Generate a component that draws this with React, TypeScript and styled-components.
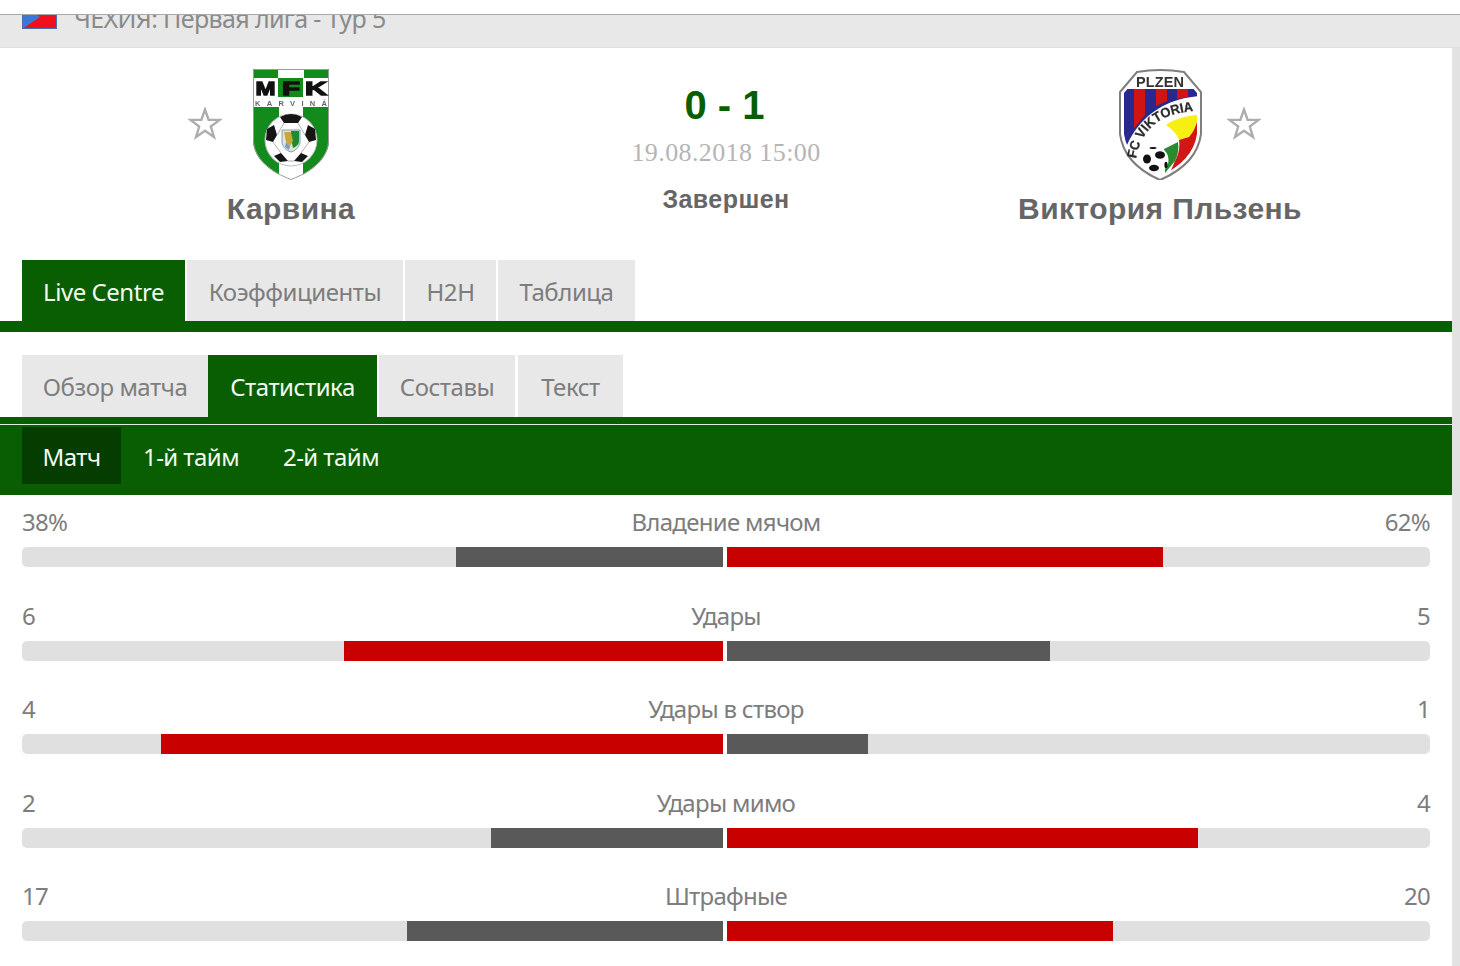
import React from "react";
import styled, { createGlobalStyle } from "styled-components";

const GREEN = "#085e00";
const UI_FONT = `"Noto Sans", "DejaVu Sans", sans-serif`;

const Global = createGlobalStyle`
  html, body { margin: 0; padding: 0; height: 966px; overflow: hidden; background: #e2e2e2; }
  * { box-sizing: border-box; }
`;

const TopStrip = styled.div`
  height: 15px;
  background: #fff;
  border-bottom: 1px solid #a9a9a9;
`;

const LeagueBand = styled.div`
  height: 33px;
  overflow: hidden;
  background: #e8e8e8;
  border-bottom: 1px solid #e0e0e0;
  padding-left: 22px;
  display: flex;
  align-items: flex-start;
  gap: 17px;
`;

const Flag = styled.svg`
  width: 35px;
  height: 24px;
  margin-top: -10px;
  flex: none;
`;

const LeagueName = styled.div`
  font: 25px/24px ${UI_FONT};
  letter-spacing: -0.63px;
  color: #8a8a8a;
  margin-top: -9px;
  white-space: nowrap;
`;

const Page = styled.main`
  width: 1452px;
  height: 918px;
  background: #fff;
  overflow: hidden;
`;

const Header = styled.section`
  height: 212px;
  display: grid;
  grid-template-columns: 582px 288px 580px;
`;

const Team = styled.div`
  padding-top: 21px;
  display: flex;
  flex-direction: column;
  align-items: center;
`;

const CrestRow = styled.div<{ $gap: number }>`
  width: 100%;
  display: grid;
  grid-template-columns: 1fr auto 1fr;
  column-gap: ${(p) => p.$gap}px;
  align-items: center;
`;

const StarIcon = styled.svg<{ $side: "left" | "right" }>`
  width: 34px;
  height: 34px;
  margin-bottom: 2px;
  justify-self: ${(p) => (p.$side === "left" ? "end" : "start")};
  grid-column: ${(p) => (p.$side === "left" ? 1 : 3)};
  grid-row: 1;
`;

const CrestSvg = styled.svg`
  grid-column: 2;
  grid-row: 1;
  display: block;
  filter: blur(0.35px);
`;

const TeamName = styled.div`
  margin-top: 11px;
  font: bold 30px/36px "Liberation Sans", Arial, sans-serif;
  letter-spacing: 0.42px;
  color: #666;
  white-space: nowrap;
`;

const Center = styled.div`
  padding: 32px 3px 0 0;
  display: flex;
  flex-direction: column;
  align-items: center;
`;

const Score = styled.div`
  font: bold 40px/50px "Liberation Sans", Arial, sans-serif;
  color: ${GREEN};
`;

const DateText = styled.div`
  margin: 8px -3px 0 0;
  font: 26px/30px "Liberation Serif", "Times New Roman", serif;
  letter-spacing: 0.4px;
  color: #b5b5b5;
`;

const Status = styled.div`
  margin: 16px -3px 0 0;
  font: bold 25px/30px "Liberation Sans", Arial, sans-serif;
  letter-spacing: 0.45px;
  color: #666;
`;

const TabBar = styled.nav<{ $gap: number; $top: number; $line: number }>`
  margin-top: ${(p) => p.$top}px;
  padding-left: 22px;
  display: flex;
  gap: ${(p) => p.$gap}px;
  border-bottom: ${(p) => p.$line}px solid ${GREEN};
`;

const Tab = styled.div<{ $active?: boolean; $w: number; $h: number; $after?: number }>`
  flex: none;
  width: ${(p) => p.$w}px;
  height: ${(p) => p.$h}px;
  margin-right: ${(p) => p.$after ?? 0}px;
  padding-top: 2px;
  display: flex;
  align-items: center;
  justify-content: center;
  background: ${(p) => (p.$active ? GREEN : "#e8e8e8")};
  color: ${(p) => (p.$active ? "#f3fbf0" : "#7d7d7d")};
  font: 24px/30px ${UI_FONT};
  letter-spacing: -0.45px;
  white-space: nowrap;
`;

const WhiteLine = styled.div`
  height: 1px;
  background: #e2ebe0;
`;

const PeriodBar = styled.div`
  height: 70px;
  background: ${GREEN};
  padding: 2px 0 0 22px;
  display: flex;
  align-items: flex-start;
`;

const Period = styled.div<{ $active?: boolean; $w: number }>`
  width: ${(p) => p.$w}px;
  height: 57px;
  padding-top: 2px;
  display: flex;
  align-items: center;
  justify-content: center;
  background: ${(p) => (p.$active ? "#053c00" : "transparent")};
  color: #f3fbf0;
  font: 24px/30px ${UI_FONT};
  letter-spacing: -0.55px;
  white-space: nowrap;
`;

const StatList = styled.section`
  padding: 9px 22px 0;
  display: grid;
  width: 1452px;
  row-gap: 30.5px;
`;

const StatRow = styled.div`
  display: grid;
  row-gap: 7px;
`;

const StatLabels = styled.div`
  display: grid;
  grid-template-columns: 1fr auto 1fr;
  font: 24px/36px ${UI_FONT};
  letter-spacing: -0.7px;
  color: #7d7d7d;
`;

const RightValue = styled.span`
  text-align: right;
`;

const Track = styled.div`
  display: grid;
  grid-template-columns: 701px 1fr;
  column-gap: 4px;
  height: 20px;
`;

const Half = styled.div<{ $side: "left" | "right" }>`
  background: #e0e0e0;
  display: flex;
  justify-content: ${(p) => (p.$side === "left" ? "flex-end" : "flex-start")};
  border-radius: ${(p) => (p.$side === "left" ? "5px 0 0 5px" : "0 5px 5px 0")};
`;

const Fill = styled.div<{ $lead: boolean }>`
  height: 100%;
  background: ${(p) => (p.$lead ? "#c80000" : "#595959")};
`;

const Star = ({ side }: { side: "left" | "right" }) => (
  <StarIcon $side={side} viewBox="0 0 34 34">
    <polygon
      points="17,2.5 20.6,12.8 31.6,12.9 22.8,19.5 26,30 17,23.8 8,30 11.2,19.5 2.4,12.9 13.4,12.8"
      fill="#fff"
      stroke="#adadad"
      strokeWidth="2.4"
    />
  </StarIcon>
);

const KarvinaCrest = () => (
  <CrestSvg width="76" height="111" viewBox="0 0 76 111">
    <defs>
      <clipPath id="kshield">
        <path d="M0 0H76V71C76 90 57 104 38 111C19 104 0 90 0 71Z" />
      </clipPath>
    </defs>
    <g clipPath="url(#kshield)">
      <rect width="76" height="111" fill="#fff" />
      <rect width="25" height="9" fill="#138a1c" />
      <rect x="51" width="25" height="9" fill="#138a1c" />
      <rect y="38" width="26" height="73" fill="#138a1c" />
      <rect x="50" y="38" width="26" height="73" fill="#138a1c" />
      <rect x="25" y="9" width="25" height="19" fill="#138a1c" />
    </g>
    <path d="M0.5 0.5H75.5V71C75.5 90 57 103.5 38 110.5C19 103.5 0.5 90 0.5 71Z" fill="none" stroke="#9a9a9a" />
    <g fontFamily="Liberation Sans" fontWeight="900" fontSize="19" stroke="#111" strokeWidth="1.3" fill="#111">
      <text x="2.5" y="26" textLength="20" lengthAdjust="spacingAndGlyphs">M</text>
      <text x="29" y="26" textLength="18" lengthAdjust="spacingAndGlyphs">F</text>
      <text x="52" y="26" textLength="22" lengthAdjust="spacingAndGlyphs">K</text>
    </g>
    <text x="2" y="36.5" fontFamily="Liberation Sans" fontSize="7.5" fontWeight="700" textLength="72" fill="#666">KARVINÁ</text>
    <circle cx="38" cy="71" r="26" fill="#fff" stroke="#bdbdbd" />
    <g fill="#151515">
      <path d="M27 48Q38 42 49 48L45 54H31Z" />
      <path d="M14 60L21 56L24 66L20 73L13 71Z" />
      <path d="M62 60L55 56L52 66L56 73L63 71Z" />
      <path d="M21 87L28 84L35 92L27 93Z" />
      <path d="M55 87L48 84L41 92L49 93Z" />
    </g>
    <path d="M31 54L24 66M45 54L52 66M20 73L28 84M56 73L48 84M35 92H41" stroke="#9a9a9a" strokeWidth="0.8" fill="none" />
    <path d="M29 61H47V74Q45 81 38 83Q31 81 29 74Z" fill="#dfe8d6" stroke="#7c9bb8" />
    <path d="M38 62H46V73Q45 77 40 79L38 70Z" fill="#1f8b2f" />
    <path d="M31 63L38 63L40 72L37 77L33 73Z" fill="#c8a838" />
    <path d="M33 73L37 77L36 81L32 78Z" fill="#7c9bb8" />
  </CrestSvg>
);

const PlzenCrest = () => (
  <CrestSvg width="83" height="111" viewBox="0 0 83 111">
    <defs>
      <clipPath id="pinner">
        <path d="M5 24L17 10Q41 5 66 10L78 24V65Q74 92 41 107Q9 92 5 65Z" />
      </clipPath>
      <path id="parc" d="M17 90C20 72 28 60 40 52C50 46 62 43 81 41" />
    </defs>
    <path d="M1 23L18 3Q41 -1 65 3L82 23V65Q78 95 41 111Q5 95 1 65Z" fill="#fff" stroke="#7e7e7e" strokeWidth="2" />
    <g clipPath="url(#pinner)">
      <path d="M4 20H80V27L66 29C40 35 20 50 8 76H4Z" fill="#28288f" />
      <path d="M15 20H26V46L15 60Z" fill="#cf1414" />
      <path d="M37 20H48V32L37 37Z" fill="#cf1414" />
      <path d="M58 20H69V28L58 30Z" fill="#cf1414" />
      <path d="M47 56C56 50 66 47 79 46C78 55 75 63 70 68L60 71C58 65 53 60 47 56Z" fill="#f7ee12" />
      <path d="M79 50V66Q74 88 50 106L56 92C60 85 61 78 60 71L70 68C75 63 77 56 79 50Z" fill="#d21515" />
      <path d="M45 80L59 73C60 80 59 86 56 92L46 104Z" fill="#2a8a2e" />
    </g>
    <text x="17" y="18" fontFamily="Liberation Sans" fontWeight="700" fontSize="14.5" textLength="48" fill="#333">PLZEN</text>
    <text fontFamily="Liberation Sans" fontWeight="700" fontSize="13.5" fill="#2b2b2b" stroke="#2b2b2b" strokeWidth="0.25">
      <textPath href="#parc" textLength="82" lengthAdjust="spacingAndGlyphs">FC VIKTORIA</textPath>
    </text>
    <circle cx="36" cy="91" r="13.5" fill="#fff" />
    <g fill="#111">
      <ellipse cx="41" cy="86" rx="5" ry="3.8" />
      <ellipse cx="28" cy="90" rx="4" ry="4.5" />
      <ellipse cx="35" cy="99" rx="5" ry="3.3" />
      <ellipse cx="47" cy="96" rx="1.6" ry="3.2" />
      <ellipse cx="34" cy="79" rx="3.5" ry="1.1" />
    </g>
  </CrestSvg>
);

const stats = [
  { name: "Владение мячом", l: "38%", r: "62%", lw: 267, rw: 436, lLead: false, rLead: true },
  { name: "Удары", l: "6", r: "5", lw: 379, rw: 323, lLead: true, rLead: false },
  { name: "Удары в створ", l: "4", r: "1", lw: 562, rw: 141, lLead: true, rLead: false },
  { name: "Удары мимо", l: "2", r: "4", lw: 232, rw: 471, lLead: false, rLead: true },
  { name: "Штрафные", l: "17", r: "20", lw: 316, rw: 386, lLead: false, rLead: true },
];

export default function App() {
  return (
    <>
      <Global />
      <TopStrip />
      <LeagueBand>
        <Flag viewBox="0 0 35 24">
          <rect width="35" height="12" fill="#f4f4f4" />
          <rect y="10" width="35" height="14" fill="#f0101c" />
          <polygon points="0,0 18,12 0,24" fill="#3b78d6" />
          <rect x="0.5" y="0.5" width="34" height="23" fill="none" stroke="#4a6fb0" />
        </Flag>
        <LeagueName>ЧЕХИЯ: Первая лига - Тур 5</LeagueName>
      </LeagueBand>
      <Page>
        <Header>
          <Team>
            <CrestRow $gap={31}>
              <Star side="left" />
              <KarvinaCrest />
            </CrestRow>
            <TeamName>Карвина</TeamName>
          </Team>
          <Center>
            <Score>0 - 1</Score>
            <DateText>19.08.2018 15:00</DateText>
            <Status>Завершен</Status>
          </Center>
          <Team>
            <CrestRow $gap={25}>
              <PlzenCrest />
              <Star side="right" />
            </CrestRow>
            <TeamName>Виктория Пльзень</TeamName>
          </Team>
        </Header>
        <TabBar $gap={2} $top={0} $line={11}>
          <Tab $active $w={163} $h={61}>Live Centre</Tab>
          <Tab $w={216} $h={61}>Коэффициенты</Tab>
          <Tab $w={91} $h={61}>H2H</Tab>
          <Tab $w={137} $h={61}>Таблица</Tab>
        </TabBar>
        <TabBar $gap={0} $top={23} $line={7}>
          <Tab $w={186} $h={62}>Обзор матча</Tab>
          <Tab $active $w={169} $h={62} $after={2}>Статистика</Tab>
          <Tab $w={136} $h={62} $after={3}>Составы</Tab>
          <Tab $w={105} $h={62}>Текст</Tab>
        </TabBar>
        <WhiteLine />
        <PeriodBar>
          <Period $active $w={99}>Матч</Period>
          <Period $w={140}>1-й тайм</Period>
          <Period $w={140}>2-й тайм</Period>
        </PeriodBar>
        <StatList>
          {stats.map((s) => (
            <StatRow key={s.name}>
              <StatLabels>
                <span>{s.l}</span>
                <span>{s.name}</span>
                <RightValue>{s.r}</RightValue>
              </StatLabels>
              <Track>
                <Half $side="left">
                  <Fill $lead={s.lLead} style={{ width: s.lw }} />
                </Half>
                <Half $side="right">
                  <Fill $lead={s.rLead} style={{ width: s.rw }} />
                </Half>
              </Track>
            </StatRow>
          ))}
        </StatList>
      </Page>
    </>
  );
}
